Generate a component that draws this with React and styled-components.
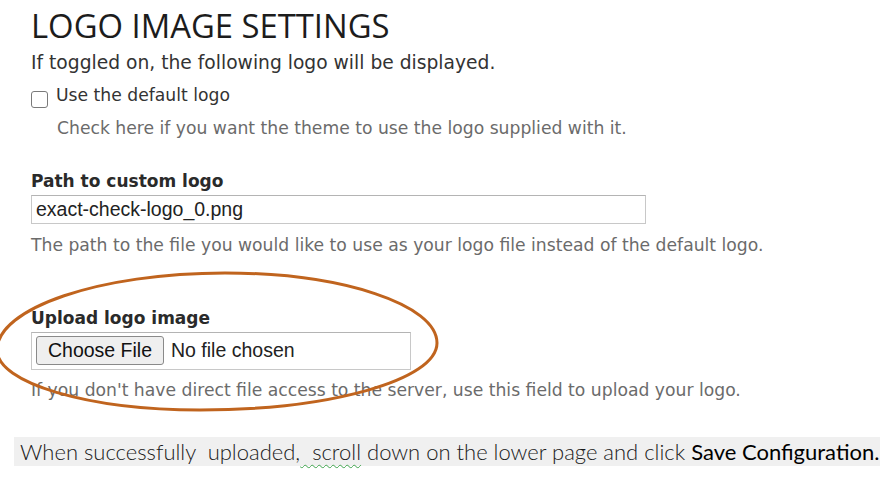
import React from "react";
import styled, { createGlobalStyle } from "styled-components";

const Global = createGlobalStyle`
  html, body { margin: 0; padding: 0; background: #fff; }
  body { font-family: "DejaVu Sans", Verdana, sans-serif; }
`;

const Page = styled.div`
  position: relative;
  width: 887px;
  height: 493px;
  overflow: hidden;
  background: #fff;
  padding-top: 10px;
  box-sizing: border-box;
`;

const Section = styled.div`
  display: flex;
  flex-direction: column;
  align-items: flex-start;
  padding-left: 31px;
`;

const Title = styled.h1`
  margin: 0;
  font-family: "Open Sans", sans-serif;
  font-weight: 400;
  font-size: 32.8px;
  line-height: 32.5px;
  color: #1c1c1c;
`;

const Text = styled.div`
  margin-top: ${(p) => p.$mt || 0}px;
  margin-left: ${(p) => p.$ml || 0}px;
  font-size: ${(p) => (p.$large ? 18.7 : 17.2)}px;
  line-height: 22px;
  color: ${(p) => (p.$muted ? "#6b6b6b" : "#333")};
  white-space: nowrap;
`;

const CheckRow = styled.label`
  display: flex;
  align-items: flex-start;
  gap: 8px;
  margin-top: 10px;
`;

const Box = styled.span`
  display: block;
  width: 17px;
  height: 17px;
  margin-top: 7px;
  box-sizing: border-box;
  border: 1px solid #7a7a7a;
  border-radius: 3px;
  background: #fff;
`;

const Label = styled.div`
  margin-top: ${(p) => p.$mt}px;
  font-size: 17px;
  line-height: 20px;
  font-weight: 700;
  color: #2a2a2a;
  white-space: nowrap;
`;

const TextInput = styled.div`
  margin-top: ${(p) => p.$mt}px;
  width: ${(p) => p.$w}px;
  height: ${(p) => p.$h}px;
  box-sizing: border-box;
  border: 1px solid #c8c8c8;
  border-top-color: #b4b4b4;
  background: #fff;
  display: flex;
  align-items: center;
  padding: 0 4px;
  font-family: "Liberation Sans", Arial, sans-serif;
  font-size: 19.5px;
  color: #222;
  gap: 7px;
  white-space: nowrap;
`;

const FileButton = styled.span`
  display: flex;
  align-items: center;
  justify-content: center;
  width: 128px;
  height: 29px;
  box-sizing: border-box;
  border: 1px solid #8a8a8a;
  border-radius: 3px;
  background: #efefef;
  color: #111;
  font-family: "Liberation Sans", Arial, sans-serif;
  font-size: 19.5px;
`;

const Caption = styled.div`
  margin: 36px 7px 0 14px;
  height: 29px;
  background: #f0f0f0;
  padding-left: 6px;
  display: flex;
  align-items: center;
  font-family: Lato, "Open Sans", sans-serif;
  font-weight: 300;
  font-size: 22px;
  color: #1a1a1a;
  white-space: pre;
`;

const Strong = styled.span`
  font-weight: 400;
  color: #000;
`;

const Squiggle = styled.span`
  text-decoration: underline wavy #3fa34d;
  text-decoration-thickness: 1px;
  text-underline-offset: 4px;
`;

const Annotation = styled.svg`
  position: absolute;
  left: 0;
  top: 0;
  pointer-events: none;
`;

export default function App() {
  return (
    <>
      <Global />
      <Page>
        <Section>
          <Title>LOGO IMAGE SETTINGS</Title>
          <Text $mt={9} $large>If toggled on, the following logo will be displayed.</Text>
          <CheckRow>
            <Box />
            <Text>Use the default logo</Text>
          </CheckRow>
          <Text $mt={9} $ml={26} $muted>
            Check here if you want the theme to use the logo supplied with it.
          </Text>
          <Label $mt={32}>Path to custom logo</Label>
          <TextInput $mt={4.5} $w={615} $h={29}>exact-check-logo_0.png</TextInput>
          <Text $mt={10} $muted>
            The path to the file you would like to use as your logo file instead of the default logo.
          </Text>
          <Label $mt={52}>Upload logo image</Label>
          <TextInput $mt={3.5} $w={380} $h={38}>
            <FileButton>Choose File</FileButton>
            <span>No file chosen</span>
          </TextInput>
          <Text $mt={9} $muted>
            If you don't have direct file access to the server, use this field to upload your logo.
          </Text>
        </Section>
        <Caption>
          When successfully  uploaded,<Squiggle>  scroll</Squiggle> down on the lower page and click <Strong>Save Configuration.</Strong>
        </Caption>
        <Annotation width="887" height="493" viewBox="0 0 887 493">
          <path
            d="M225 273 C342 273 437 304.5 437 343 C437 380 330 410 200 410 C88 410 -3 383 -3 350 C-3 308 100 273 225 273 Z"
            fill="none"
            stroke="#c0641e"
            strokeWidth="3"
          />
        </Annotation>
      </Page>
    </>
  );
}
